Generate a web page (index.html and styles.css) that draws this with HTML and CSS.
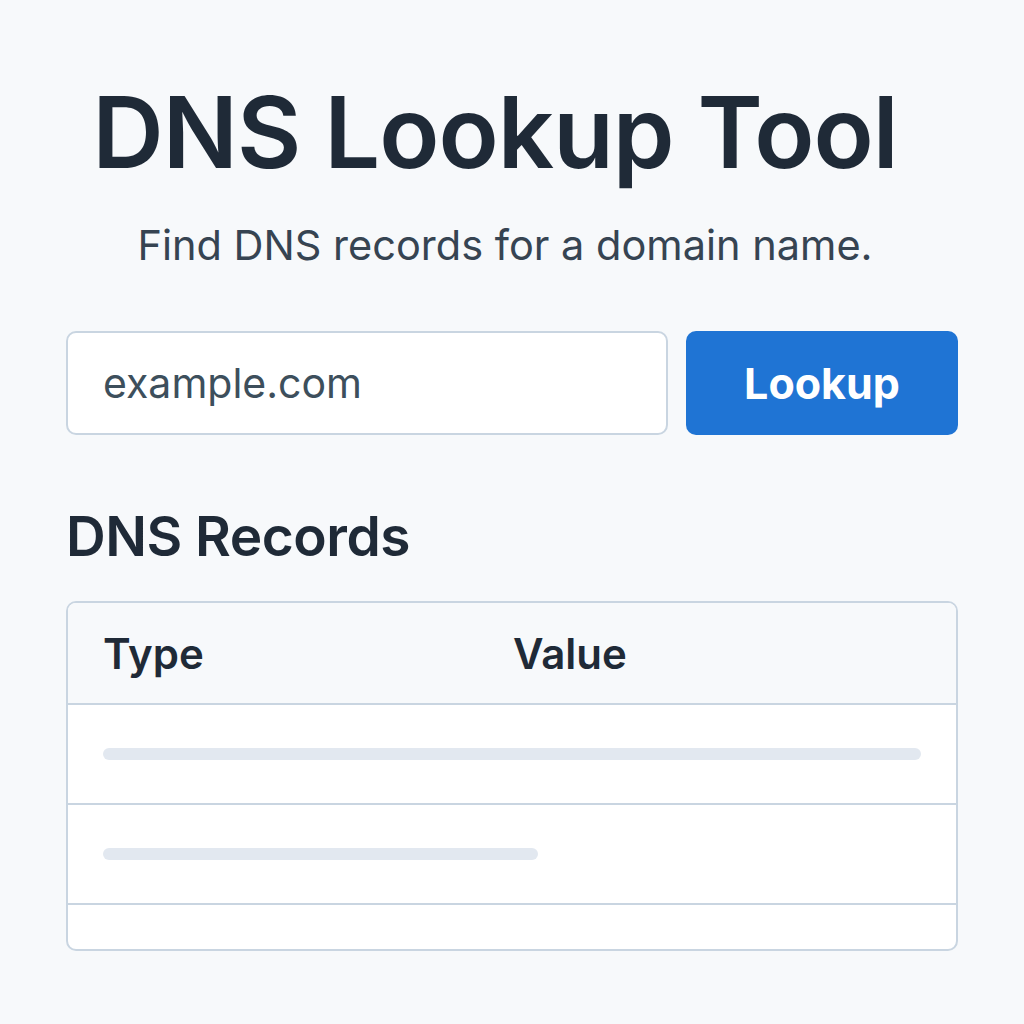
FILE: index.html
```html
<!DOCTYPE html>
<html lang="en">
<head>
    <meta charset="UTF-8">
    <meta name="viewport" content="width=device-width, initial-scale=1.0">
    <title>DNS Lookup Tool</title>
    <link rel="stylesheet" href="styles.css">
</head>
<body>
    <div class="container">
        <h1>DNS Lookup Tool</h1>
        <p class="subtitle">Find DNS records for a domain name.</p>
        <div class="search">
            <input type="text" id="domain" placeholder="example.com">
            <button>Lookup</button>
        </div>
        <h2>DNS Records</h2>
        <div class="records">
            <div class="records-head">
                <span class="col-type">Type</span>
                <span class="col-value">Value</span>
            </div>
            <div class="records-row">
                <div class="skeleton skeleton-long"></div>
            </div>
            <div class="records-row">
                <div class="skeleton skeleton-short"></div>
            </div>
            <div class="records-row records-last"></div>
        </div>
    </div>
</body>
</html>
```

FILE: styles.css
```css
body {
    font-family: "Inter", "Liberation Sans", sans-serif;
    background-color: #f7f9fb;
    color: #1f2a37;
    margin: 0;
}
.container {
    width: 892px;
    margin: 0 auto;
    padding-top: 72px;
}
h1 {
    font-size: 99px;
    font-weight: 600;
    letter-spacing: -1px;
    line-height: 120px;
    margin: 0;
    text-align: center;
    padding-right: 34px;
}
.subtitle {
    font-size: 41.5px;
    color: #364452;
    text-align: center;
    margin: 28px 0 0;
    line-height: 50px;
    padding-right: 14px;
}
.search {
    display: flex;
    gap: 18px;
    margin-top: 61px;
}
.search input {
    flex: 1;
    min-width: 0;
    width: 0;
    height: 104px;
    box-sizing: border-box;
    border: 2px solid #c9d5e1;
    border-radius: 10px;
    background: #fff;
    padding: 0 35px;
    font-family: inherit;
    font-size: 41px;
    color: #3d4f5c;
}
.search input::placeholder {
    color: #3d4f5c;
}
.search button {
    flex-shrink: 0;
    width: 272px;
    height: 104px;
    border: none;
    border-radius: 10px;
    background-color: #1f74d4;
    color: #fff;
    font-family: inherit;
    font-size: 43px;
    font-weight: 700;
}
h2 {
    font-size: 55px;
    font-weight: 600;
    margin: 69px 0 0;
    line-height: 64px;
    letter-spacing: -0.5px;
}
.records {
    margin-top: 33px;
    border: 2px solid #c9d5e1;
    border-radius: 10px;
    background: #fff;
    overflow: hidden;
}
.records-head {
    display: flex;
    align-items: center;
    height: 100px;
    padding: 0 35px;
    background: #f7f9fb;
    border-bottom: 2px solid #c9d5e1;
    font-size: 42px;
    font-weight: 600;
}
.col-type {
    width: 410px;
}
.records-row {
    height: 98px;
    padding: 0 35px;
    display: flex;
    align-items: center;
    border-bottom: 2px solid #c9d5e1;
}
.records-last {
    height: 44px;
    border-bottom: none;
}
.skeleton {
    height: 12px;
    border-radius: 6px;
    background: #e2e8f0;
}
.skeleton-long {
    width: 818px;
}
.skeleton-short {
    width: 435px;
}
```
